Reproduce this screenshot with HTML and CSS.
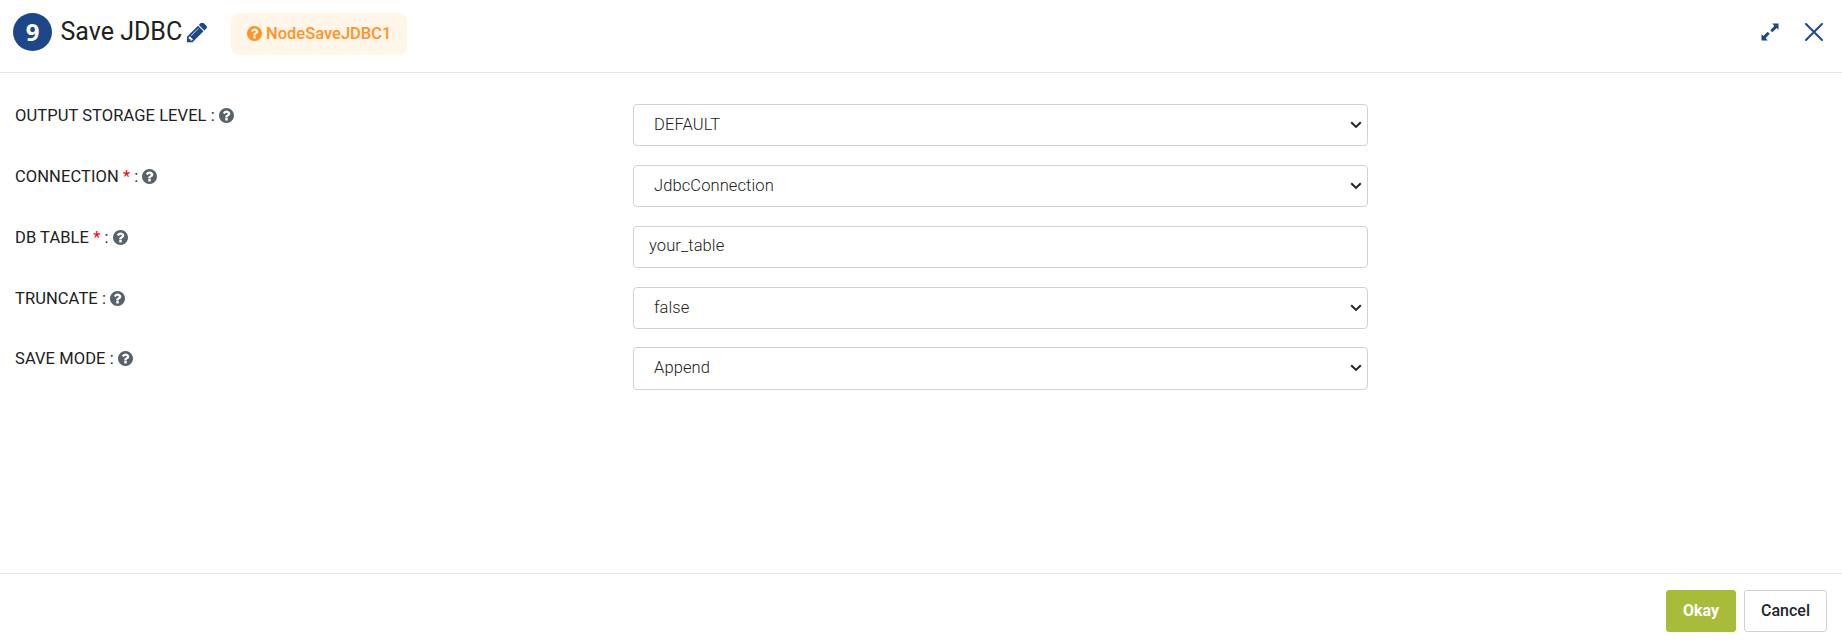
FILE: index.html
```html
<!DOCTYPE html>
<html lang="en">
<head>
<meta charset="utf-8">
<title>Save JDBC</title>
<link rel="stylesheet" href="styles.css">
</head>
<body>
<svg class="defs" width="0" height="0" aria-hidden="true">
  <symbol id="help" viewBox="128 128 1536 1536"><path d="M1024 1376v-192q0-14-9-23t-23-9h-192q-14 0-23 9t-9 23v192q0 14 9 23t23 9h192q14 0 23-9t9-23zm256-672q0-88-55.500-163t-138.500-116-170-41q-243 0-371 213-15 24 8 42l132 100q7 6 19 6 16 0 25-12 53-68 86-92 34-24 86-24 48 0 85.500 26t37.500 59q0 38-20 61t-68 45q-63 28-115.500 86.500t-52.500 125.500v36q0 14 9 23t23 9h192q14 0 23-9t9-23q0-19 21.500-49.500t54.500-49.500q32-18 49-28.500t46-35 44.500-48 28-60.500 12.500-81zm384 192q0 209-103 385.500t-279.500 279.500-385.500 103-385.500-103-279.500-279.500-103-385.500 103-385.500 279.500-279.500 385.500-103 385.500 103 279.500 279.500 103 385.500z"/></symbol>
  <symbol id="chevron" viewBox="0 0 12 8"><path d="M1.200 1.300 6 5.900l4.800-4.600" fill="none" stroke="currentColor" stroke-width="2.100"/></symbol>
</svg>
<div class="dialog">
  <header class="header">
    <span class="step">9</span>
    <h1 class="title">Save JDBC</h1>
    <svg class="pencil" viewBox="128 256 1515 1408"><path d="M491 1536l91-91-235-235-91 91v107h128v128h107zm523-928q0-22-22-22-10 0-17 7l-542 542q-7 7-7 17 0 22 22 22 10 0 17-7l542-542q7-7 7-17zm-54-192l416 416-832 832h-416v-416zm683 96q0 53-37 90l-166 166-416-416 166-165q36-38 90-38 53 0 91 38l235 234q37 39 37 91z"/></svg>
    <span class="badge"><svg class="help"><use href="#help"/></svg>NodeSaveJDBC1</span>
    <div class="tools">
      <svg class="expand" viewBox="0 0 18 18"><path d="M11.300 0.500H17.500V6.700L15.700 5 11.300 9.300 9.300 7.300 13.300 3zM6.700 17.500H.5V11.300L2.300 13 6.700 8.700 8.700 10.700 4.700 15z"/></svg>
      <svg class="close" viewBox="0 0 18 18"><path d="M1 1 17 17M17 1 1 17"/></svg>
    </div>
  </header>
  <main class="form">
    <div class="row"><div class="label">OUTPUT STORAGE LEVEL :<svg class="help"><use href="#help"/></svg></div><div class="field select">DEFAULT<svg class="chevron"><use href="#chevron"/></svg></div></div>
    <div class="row"><div class="label">CONNECTION <span class="required">*</span> :<svg class="help"><use href="#help"/></svg></div><div class="field select">JdbcConnection<svg class="chevron"><use href="#chevron"/></svg></div></div>
    <div class="row"><div class="label">DB TABLE <span class="required">*</span> :<svg class="help"><use href="#help"/></svg></div><div class="field input">your_table</div></div>
    <div class="row"><div class="label">TRUNCATE :<svg class="help"><use href="#help"/></svg></div><div class="field select">false<svg class="chevron"><use href="#chevron"/></svg></div></div>
    <div class="row"><div class="label">SAVE MODE :<svg class="help"><use href="#help"/></svg></div><div class="field select">Append<svg class="chevron"><use href="#chevron"/></svg></div></div>
  </main>
  <footer class="footer">
    <button class="button primary">Okay</button>
    <button class="button">Cancel</button>
  </footer>
</div>
</body>
</html>
```
FILE: styles.css
```css
* { box-sizing: border-box; }
body { margin: 0; background: #fff; color: #212121; font: 400 16px/24px Roboto, sans-serif; }
.defs { position: absolute; }
.dialog { display: flex; flex-direction: column; height: 643px; }
.header { display: flex; align-items: flex-start; height: 73px; padding: 13px 19px 0 13px; border-bottom: 1px solid #e5e6e8; }
.step { width: 39px; height: 38px; border-radius: 50%; background: #1d4788; color: #fff; font: 700 24px/38px "Noto Sans", sans-serif; text-align: center; }
.title { margin: 3px 0 0 8.500px; font-size: 25px; line-height: 32px; font-weight: 400; white-space: nowrap; width: 121.500px; }
.pencil { width: 20px; height: 20px; margin: 10px 0 0 5px; fill: #1d4788; }
.help { width: 15px; height: 15px; fill: #58626d; flex: none; }
.badge { display: flex; align-items: center; width: 176px; height: 42px; margin-left: 24px; padding: 0 16px; border-radius: 8px; background: #fff5e8; color: #ff9329; font-size: 16.500px; font-weight: 500; gap: 4px; }
.badge .help { fill: #ff9329; margin-bottom: 1px; }
.tools { display: flex; gap: 26px; margin: 10px 0 0 auto; }
.expand { width: 18px; height: 18px; fill: #1d4788; }
.close { width: 18px; height: 18px; fill: none; stroke: #1d4788; stroke-width: 2; stroke-linecap: round; }
.form { flex: 1; padding: 31.200px 15px 0; }
.row { display: grid; grid-template-columns: 618px 735px; height: 60.800px; }
.label { display: flex; align-items: center; height: 24px; white-space: pre; font-size: 16.500px; letter-spacing: 0.080px; }
.label .help { margin: 0 0 1px 4px; }
.required { color: #f00; }
.field { display: flex; align-items: center; justify-content: space-between; height: 42.200px; border: 1px solid #ced3db; border-radius: 4px; color: #212121; padding: 0 5px 0 20px; font-size: 16.500px; font-weight: 300; letter-spacing: 0.100px; }
.input { padding-left: 15px; padding-bottom: 2px; }
.chevron { width: 12px; height: 8px; color: #212529; }
.footer { display: flex; justify-content: flex-end; gap: 8px; height: 70px; padding: 16px 15px 0; border-top: 1px solid #e5e6e8; }
.button { height: 42px; width: 83px; border: 1px solid #ced3db; border-radius: 3px; padding: 0; background: #fff; color: #212529; font: 500 16px/24px Roboto, sans-serif; }
.primary { width: 70px; border-color: #a9bc3a; background: #a9bc3a; color: #fff; font-weight: 700; }
```
